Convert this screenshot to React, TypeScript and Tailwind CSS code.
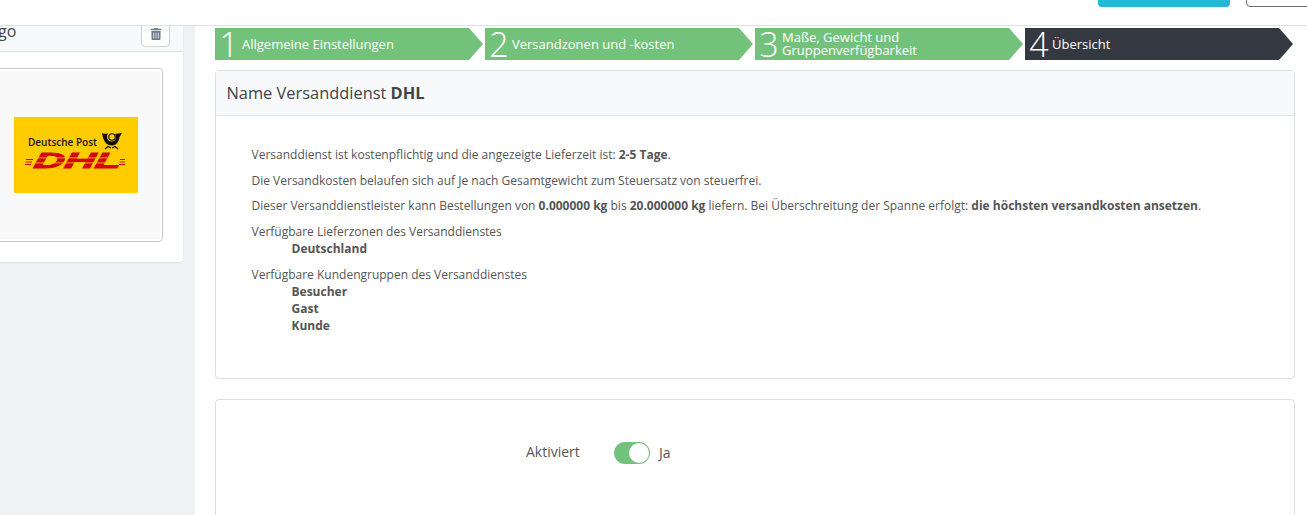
import { FaTrashAlt } from "react-icons/fa";

const steps = [
  { num: "1", text: "Allgemeine Einstellungen" },
  { num: "2", text: "Versandzonen und -kosten" },
  { num: "3", text: "Maße, Gewicht und Gruppenverfügbarkeit" },
  { num: "4", text: "Übersicht", active: true },
];

function DhlLogo() {
  return (
    <svg width="124" height="76" viewBox="0 0 124 76">
      <rect width="124" height="76" rx="1" fill="#ffcc00" />
      <text x="14" y="29" fontSize="10" fontWeight="600" fill="#1a1408" fontFamily="'Open Sans', sans-serif" textLength="69" lengthAdjust="spacingAndGlyphs">
        Deutsche Post
      </text>
      {/* Posthorn */}
      <path d="M88 16 C90 17 92 17 94 16.5 C92 20 93 24 97.5 24.5 C102 24.5 103 20 101 17 L108 16 L105.5 20 C105 26 101 28.5 97.5 28.5 C92 28.5 89 23 88 16 Z" fill="#111" />
      <circle cx="98" cy="20" r="3.2" fill="none" stroke="#111" strokeWidth="1.1" />
      <path d="M91 32 L94 29.5 L97 31 M98 31 L101 29.5 L104 32" fill="none" stroke="#111" strokeWidth="1.1" />
      <text x="28" y="51" transform="skewX(-10)" fontSize="22" fontWeight="800" fontStyle="italic" fill="#d40511" fontFamily="'Liberation Sans', sans-serif" textLength="87" lengthAdjust="spacingAndGlyphs" stroke="#d40511" strokeWidth="1">
        DHL
      </text>
      <rect x="18" y="40.5" width="90" height="0.8" fill="#ffcc00" />
      <rect x="18" y="45.5" width="90" height="0.8" fill="#ffcc00" />
      <g fill="#d40511">
        <rect x="12" y="42" width="7" height="1" />
        <rect x="11.5" y="44.5" width="6.5" height="1" />
        <rect x="11" y="47" width="6" height="1" />
        <rect x="106" y="42" width="5" height="1" />
        <rect x="105.5" y="44.5" width="5.5" height="1" />
        <rect x="105" y="47" width="6" height="1" />
      </g>
    </svg>
  );
}

function App() {
  return (
    <div className="h-[515px] w-[1307px] overflow-hidden bg-white font-['Open_Sans',sans-serif] text-[12px] text-[#555]">
      {/* top bar */}
      <div className="relative z-10 flex h-[26px] justify-end gap-4 overflow-hidden border-b border-[#dcdfe3] bg-white">
        <div className="-mt-[23px] h-[30px] w-[132px] rounded bg-[#25b6d8]" />
        <div className="-mr-[19px] -mt-[23px] h-[30px] w-[80px] rounded border border-[#6b7178] bg-white" />
      </div>

      <div className="flex">
        {/* left column */}
        <div className="h-[489px] w-[195px] shrink-0 overflow-hidden bg-[#eff1f3]">
          <div className="-ml-[31px] -mt-[16px] w-[214px] rounded bg-white shadow-[0_1px_2px_rgba(0,0,0,0.08)]">
            <div className="flex h-[42px] items-center justify-between border-b border-[#dfe3e7] bg-[#f8f9fa] pl-[11px] pr-[13px]">
              <span className="text-[16px] text-[#444]">Logo</span>
              <button className="mt-[6px] flex h-[26px] w-[29px] items-center justify-center rounded border border-[#cdd3d9] bg-white text-[#6c7a89]">
                <FaTrashAlt size={12} />
              </button>
            </div>
            <div className="px-[20px] py-[16px]">
              <div className="flex h-[174px] w-[174px] rounded border border-[#c9cdd1] bg-white p-[2px]">
                <div className="flex flex-1 items-center justify-center bg-[#f9f9fa]">
                  <DhlLogo />
                </div>
              </div>
            </div>
            <div className="h-[4px]" />
          </div>
        </div>

        {/* right column */}
        <div className="flex-1 pl-5 pr-3 pt-[2px]">
          <div className="grid w-[1078px] grid-cols-4 gap-[2px]">
            {steps.map((s) => (
              <div
                key={s.num}
                className={
                  s.active
                    ? "flex h-8 items-center bg-[#343840] pl-[3px] text-white [clip-path:polygon(0_0,calc(100%-14px)_0,100%_50%,calc(100%-14px)_100%,0_100%)]"
                    : "flex h-8 items-center bg-[#73c27b] pl-[3px] text-white [clip-path:polygon(0_0,calc(100%-14px)_0,100%_50%,calc(100%-14px)_100%,0_100%)]"
                }
              >
                <span className="w-[22px] text-center text-[34px] font-light leading-8">{s.num}</span>
                <span className="ml-[2px] w-[170px] text-[13px] leading-[13px]">{s.text}</span>
              </div>
            ))}
          </div>

          <div className="mt-[10px] h-[309px] w-[1080px] rounded border border-[#dcdfe3]">
            <div className="flex h-[45px] items-center border-b border-[#e1e5e8] bg-[#f8f9fa] px-[10.5px] text-[16.4px] font-medium text-[#3f4448]">
              <span>
                Name Versanddienst <b className="font-bold">DHL</b>
              </span>
            </div>
            <div className="pl-[35.5px] pr-9 pt-[30px] leading-[17px]">
              <p className="mb-[9px]">
                Versanddienst ist kostenpflichtig und die angezeigte Lieferzeit ist: <b>2-5 Tage</b>.
              </p>
              <p className="mb-2">Die Versandkosten belaufen sich auf Je nach Gesamtgewicht zum Steuersatz von steuerfrei.</p>
              <p className="mb-[9px]">
                Dieser Versanddienstleister kann Bestellungen von <b>0.000000 kg</b> bis <b>20.000000 kg</b> liefern. Bei
                Überschreitung der Spanne erfolgt: <b>die höchsten versandkosten ansetzen</b>.
              </p>
              <p>Verfügbare Lieferzonen des Versanddienstes</p>
              <p className="mb-[9px] pl-10 font-bold">Deutschland</p>
              <p>Verfügbare Kundengruppen des Versanddienstes</p>
              <p className="pl-10 font-bold">Besucher</p>
              <p className="pl-10 font-bold">Gast</p>
              <p className="pl-10 font-bold">Kunde</p>
            </div>
          </div>

          <div className="mt-[20px] h-[200px] w-[1080px] rounded border border-[#dcdfe3] pl-[310px] pt-[41px]">
            <div className="flex items-center text-[14px]">
              <span className="mb-[2px] w-[88px]">Aktiviert</span>
              <span className="relative h-[22px] w-9 rounded-full bg-[#73c27b]">
                <span className="absolute right-[1px] top-[1px] h-5 w-5 rounded-full bg-white" />
              </span>
              <span className="ml-[9px]">Ja</span>
            </div>
          </div>
        </div>
      </div>
    </div>
  );
}

export default App;
